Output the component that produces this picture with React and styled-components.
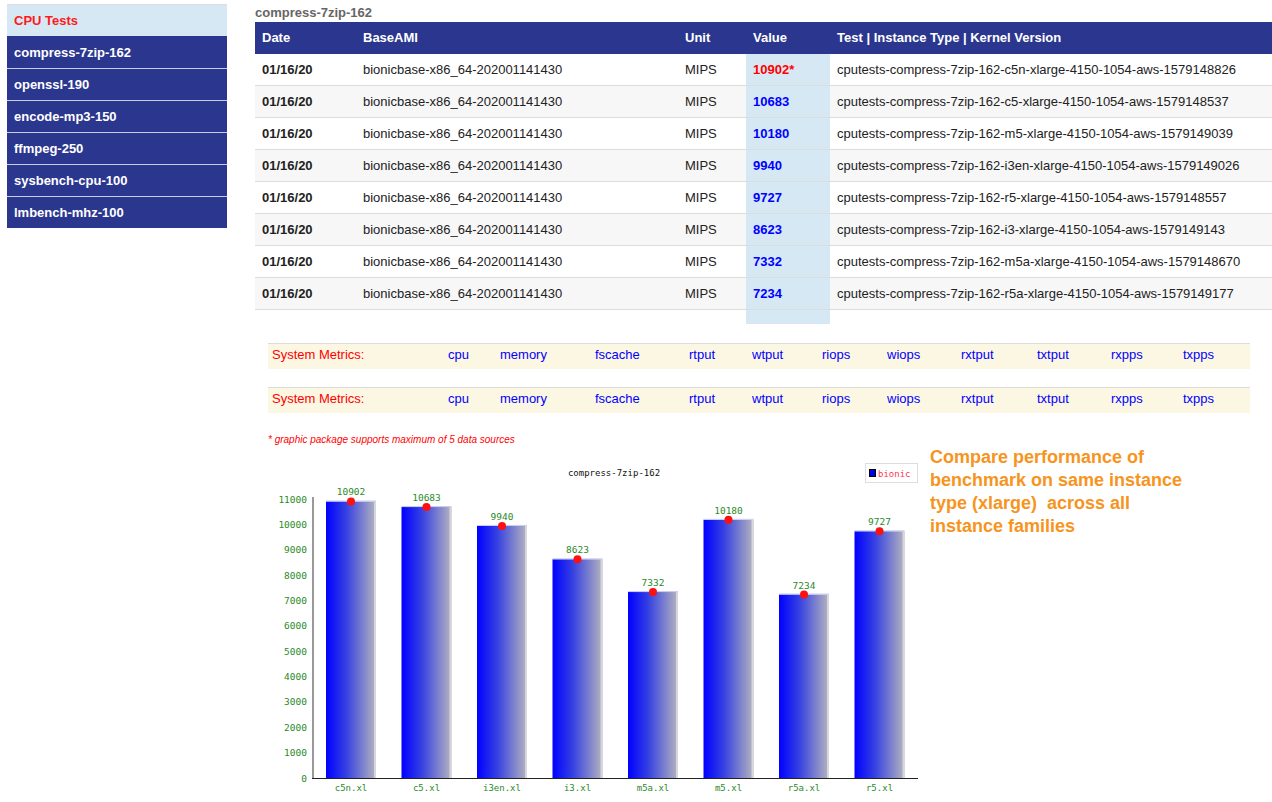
import React from "react";
import styled, { createGlobalStyle } from "styled-components";

// --- Global ---
const GlobalStyle = createGlobalStyle`
  html, body {
    margin: 0;
    padding: 0;
    background: #fff;
    font-family: "Liberation Sans", Arial, sans-serif;
  }
`;

const NAVY = "#2b378f";
const VALUE_BG = "#d5e8f4";

// --- Layout ---
const Page = styled.div`
  display: flex;
  align-items: flex-start;
  padding: 4px 0 0 7px;
`;

const Main = styled.div`
  flex: 1;
  min-width: 0;
  margin-left: 28px;
`;

// --- Sidebar ---
const Sidebar = styled.nav`
  width: 220px;
  flex: none;
`;

const SideHeader = styled.div`
  height: 31px;
  line-height: 31px;
  border-top: 1px solid #ddd;
  background: ${VALUE_BG};
  color: #ff1a1a;
  font-size: 13px;
  font-weight: bold;
  padding-left: 7px;
`;

const SideItem = styled.a`
  display: block;
  height: 31px;
  line-height: 31px;
  background: ${NAVY};
  color: #fff;
  font-size: 13px;
  font-weight: bold;
  padding-left: 7px;
  text-decoration: none;
  border-top: 1px solid ${(p) => (p.$first ? NAVY : "#c9cbe0")};
`;

// --- Table ---
const Title = styled.div`
  height: 18px;
  line-height: 17px;
  color: #666;
  font-size: 13px;
  font-weight: bold;
`;

const Table = styled.table`
  width: 100%;
  border-collapse: collapse;
  table-layout: fixed;
  font-size: 13px;
`;

const Th = styled.th`
  height: 31px;
  padding: 0 0 1px 7px;
  background: ${NAVY};
  color: #fff;
  text-align: left;
  font-weight: bold;
`;

const Row = styled.tr`
  background: ${(p) => (p.$odd ? "#f7f7f7" : "#fff")};
  border-bottom: 1px solid #ddd;
`;

const Td = styled.td`
  height: 31px;
  padding: 0 0 0 7px;
  color: #222;
  font-weight: ${(p) => (p.$bold ? "bold" : "normal")};
  white-space: nowrap;
`;

const ValueTd = styled(Td)`
  background: ${VALUE_BG};
  font-weight: bold;
  color: ${(p) => (p.$best ? "#ff0000" : "#0000ff")};
`;

const TailTd = styled.td`
  height: 14px;
  padding: 0;
  background: ${(p) => (p.$value ? VALUE_BG : "transparent")};
`;

// --- Metrics bars ---
const MetricsBar = styled.div`
  display: grid;
  grid-template-columns: 176px 52px 95px 94px 63px 70px 65px 74px 76px 74px 72px 1fr;
  align-items: center;
  height: 26px;
  margin: ${(p) => p.$top}px 22px 0 13px;
  padding: 1px 0 0 4px;
  box-sizing: border-box;
  border-top: 1px solid #dcdcdc;
  background: #fcf7e3;
  font-size: 13px;
`;

const MetricsLabel = styled.span`
  color: #ff0000;
`;

const MetricLink = styled.a`
  color: #0000ff;
  text-decoration: none;
`;

const Footnote = styled.div`
  margin: 21px 0 0 13px;
  font-size: 10px;
  font-style: italic;
  color: #ff0000;
  height: 12px;
  line-height: 12px;
`;

// --- Chart section ---
const ChartSection = styled.div`
  display: flex;
  align-items: flex-start;
  margin-top: -2px;
`;

const ChartBox = styled.div`
  width: 670px;
  height: 356px;
  flex: none;
`;

const Note = styled.div`
  margin: 2px 0 0 5px;
  width: 265px;
  color: #f7941d;
  font-size: 18px;
  font-weight: bold;
  line-height: 23px;
`;

// --- Data ---
const tests = [
  "compress-7zip-162",
  "openssl-190",
  "encode-mp3-150",
  "ffmpeg-250",
  "sysbench-cpu-100",
  "lmbench-mhz-100",
];

const rows = [
  ["10902*", "c5n", "1579148826"],
  ["10683", "c5", "1579148537"],
  ["10180", "m5", "1579149039"],
  ["9940", "i3en", "1579149026"],
  ["9727", "r5", "1579148557"],
  ["8623", "i3", "1579149143"],
  ["7332", "m5a", "1579148670"],
  ["7234", "r5a", "1579149177"],
];

const metrics = ["cpu", "memory", "fscache", "rtput", "wtput", "riops", "wiops", "rxtput", "txtput", "rxpps", "txpps"];

const bars = [
  ["c5n.xl", 10902],
  ["c5.xl", 10683],
  ["i3en.xl", 9940],
  ["i3.xl", 8623],
  ["m5a.xl", 7332],
  ["m5.xl", 10180],
  ["r5a.xl", 7234],
  ["r5.xl", 9727],
];

const ticks = [0, 1000, 2000, 3000, 4000, 5000, 6000, 7000, 8000, 9000, 10000, 11000];

const yOf = (v) => 334 - (v * 279) / 11000;
const GREEN = "#2a8a2a";
const MONO = "'DejaVu Sans Mono', 'Liberation Mono', monospace";

const BarChart = () => (
  <svg width="670" height="356" viewBox="0 0 670 356" fontFamily={MONO}>
    <defs>
      <linearGradient id="barFill" x1="0" x2="1" y1="0" y2="0">
        <stop offset="0" stopColor="#0000ff" />
        <stop offset="0.4" stopColor="#3540e2" />
        <stop offset="1" stopColor="#b4b4be" />
      </linearGradient>
    </defs>
    <text x="359" y="32" fontSize="9" textAnchor="middle" fill="#111">compress-7zip-162</text>

    <rect x="610.5" y="19.5" width="52" height="19" fill="#fff" stroke="#ddd" />
    <rect x="614.5" y="25.5" width="6" height="7" fill="#0000dd" stroke="#000" />
    <text x="623" y="33" fontSize="9" fill="#ff3355">bionic</text>

    {ticks.map((t) => (
      <text key={t} x="52" y={yOf(t) + 3.5} fontSize="9.5" textAnchor="end" fill={GREEN}>
        {t}
      </text>
    ))}

    {bars.map(([label, v], i) => {
      const x = 71 + i * 75.5;
      const top = yOf(v);
      const cx = x + 25;
      return (
        <g key={label}>
          <rect x={x} y={top} width="50" height={334 - top} fill="url(#barFill)" />
          <rect x={x + 48} y={top} width="2" height={334 - top} fill="#d6d6dc" />
          <rect x={x} y={top - 1} width="50" height="1" fill="#c8cbf0" />
          <circle cx={cx} cy={top} r="4" fill="#ff1010" />
          <text x={cx} y={top - 6} fontSize="9.5" textAnchor="middle" fill={GREEN}>{v}</text>
          <text x={cx} y="347" fontSize="9" textAnchor="middle" fill={GREEN}>{label}</text>
        </g>
      );
    })}

    <line x1="58" y1="53" x2="58" y2="334" stroke="#999" strokeWidth="2" />
    <line x1="57" y1="334.5" x2="663" y2="334.5" stroke="#222" strokeWidth="1" />
  </svg>
);

const MetricsRow = ({ top }) => (
  <MetricsBar $top={top}>
    <MetricsLabel>System Metrics:</MetricsLabel>
    {metrics.map((m) => (
      <MetricLink key={m} href="#">{m}</MetricLink>
    ))}
    <span />
  </MetricsBar>
);

// --- Main Page Component ---
const App = () => (
  <>
    <GlobalStyle />
    <Page>
      <Sidebar>
        <SideHeader>CPU Tests</SideHeader>
        {tests.map((t, i) => (
          <SideItem key={t} href="#" $first={i === 0}>{t}</SideItem>
        ))}
      </Sidebar>

      <Main>
        <Title>compress-7zip-162</Title>
        <Table>
          <colgroup>
            <col style={{ width: 101 }} />
            <col style={{ width: 322 }} />
            <col style={{ width: 68 }} />
            <col style={{ width: 84 }} />
            <col />
          </colgroup>
          <thead>
            <tr>
              <Th>Date</Th>
              <Th>BaseAMI</Th>
              <Th>Unit</Th>
              <Th>Value</Th>
              <Th>Test | Instance Type | Kernel Version</Th>
            </tr>
          </thead>
          <tbody>
            {rows.map(([val, fam, stamp], i) => (
              <Row key={fam} $odd={i % 2 === 1}>
                <Td $bold>01/16/20</Td>
                <Td>bionicbase-x86_64-202001141430</Td>
                <Td>MIPS</Td>
                <ValueTd $best={i === 0}>{val}</ValueTd>
                <Td>{`cputests-compress-7zip-162-${fam}-xlarge-4150-1054-aws-${stamp}`}</Td>
              </Row>
            ))}
          </tbody>
          <tfoot>
            <tr>
              <TailTd />
              <TailTd />
              <TailTd />
              <TailTd $value />
              <TailTd />
            </tr>
          </tfoot>
        </Table>

        <MetricsRow top={19} />
        <MetricsRow top={18} />

        <Footnote>* graphic package supports maximum of 5 data sources</Footnote>

        <ChartSection>
          <ChartBox>
            <BarChart />
          </ChartBox>
          <Note>
            Compare performance of benchmark on same instance type (xlarge)&nbsp; across all instance families
          </Note>
        </ChartSection>
      </Main>
    </Page>
  </>
);

export default App;
